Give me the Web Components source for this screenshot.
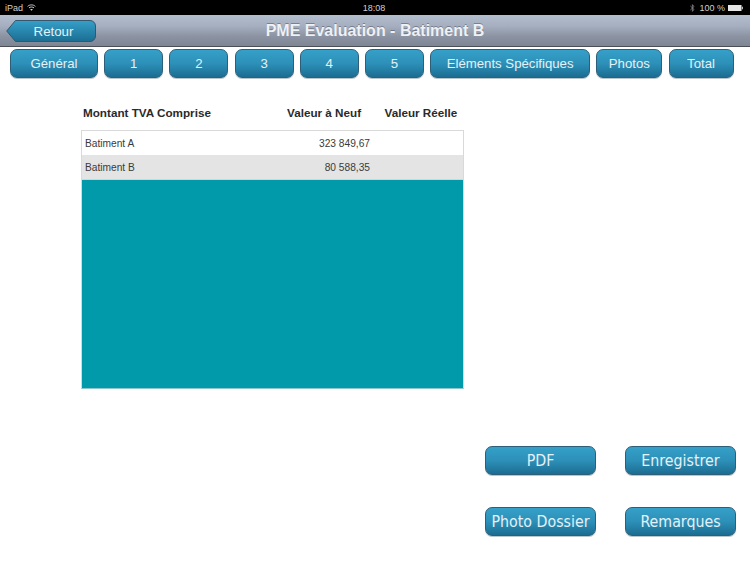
<!DOCTYPE html>
<html lang="fr">
<head>
<meta charset="utf-8">
<title>PME Evaluation</title>
<style>
  html, body { margin: 0; padding: 0; background: #fff; }
  body { width: 750px; height: 563px; overflow: hidden; font-family: "Liberation Sans", Arial, sans-serif; }
</style>
</head>
<body>
<status-bar></status-bar>
<nav-bar heading="PME Evaluation - Batiment B"></nav-bar>
<tab-row>
  <app-button style="width:88px">Général</app-button>
  <app-button style="width:59px">1</app-button>
  <app-button style="width:59px">2</app-button>
  <app-button style="width:59px">3</app-button>
  <app-button style="width:59px">4</app-button>
  <app-button style="width:59px">5</app-button>
  <app-button style="width:160px">Eléments Spécifiques</app-button>
  <app-button style="width:66px">Photos</app-button>
  <app-button style="width:65px">Total</app-button>
</tab-row>
<value-table>
  <value-row slot="rows" name="Batiment A" value="323 849,67"></value-row>
  <value-row slot="rows" name="Batiment B" value="80 588,35" selected></value-row>
</value-table>
<action-grid>
  <app-button alt>PDF</app-button>
  <app-button alt>Enregistrer</app-button>
  <app-button alt>Photo Dossier</app-button>
  <app-button alt>Remarques</app-button>
</action-grid>

<script>
class StatusBar extends HTMLElement {
  constructor() {
    super();
    const shadow = this.attachShadow({ mode: 'open' });
    shadow.innerHTML = `
      <style>
        :host {
          display: grid;
          grid-template-columns: 1fr auto 1fr;
          align-items: center;
          height: 15px;
          padding: 0 7px 0 5px;
          background: #000;
          color: #d0d0d0;
          font: 9px "Liberation Sans", Arial, sans-serif;
        }
        .left, .right { display: flex; align-items: center; }
        .left { gap: 4px; }
        .right { justify-content: flex-end; gap: 2px; }
        .right span { margin: 0 1px 0 2px; }
        svg { display: block; }
      </style>
      <div class="left">
        <span>iPad</span>
        <svg width="9" height="7" viewBox="0 0 9 7" fill="none" stroke="#d0d0d0">
          <path d="M.6 2.4C2.8.4 6.2.4 8.4 2.4"/>
          <path d="M2 3.9C3.4 2.7 5.6 2.7 7 3.9"/>
          <path d="M4.5 6.8 3.2 5.4C3.9 4.9 5.1 4.9 5.8 5.4Z" fill="#d0d0d0" stroke="none"/>
        </svg>
      </div>
      <div>18:08</div>
      <div class="right">
        <svg width="5" height="8" viewBox="0 0 5 8" fill="none" stroke="#8a8a8a" stroke-width=".8">
          <path d="M.4 2 4 5.4 2.4 7.4V.6L4 2.6.4 6"/>
        </svg>
        <span>100 %</span>
        <svg width="15" height="6" viewBox="0 0 15 6">
          <rect width="13.5" height="6" fill="#e6e6e6"/>
          <rect x="13.8" y="1.7" width="1.2" height="2.6" fill="#bbb"/>
        </svg>
      </div>
    `;
  }
}

class NavBar extends HTMLElement {
  constructor() {
    super();
    const shadow = this.attachShadow({ mode: 'open' });
    const heading = this.getAttribute('heading') || '';
    shadow.innerHTML = `
      <style>
        :host {
          display: grid;
          grid-template-columns: 1fr auto 1fr;
          align-items: center;
          box-sizing: border-box;
          height: 32px;
          padding-top: 1px;
          background: linear-gradient(#b2bdce, #a5afc0 35%, #8b93a2 70%, #7e8694);
          border-bottom: 1px solid #4a4e56;
        }
        h1 {
          margin: 0;
          color: #eef1f5;
          font: bold 16px "Liberation Sans", Arial, sans-serif;
          text-shadow: 0 -1px 0 rgba(60,66,80,.45);
        }
        .back {
          position: relative;
          display: flex;
          align-items: center;
          justify-content: center;
          box-sizing: border-box;
          width: 90px;
          height: 22px;
          margin-left: 6px;
          padding-left: 5px;
          color: #e4f1f7;
          font: 13.3px "Liberation Sans", Arial, sans-serif;
        }
        .back svg { position: absolute; inset: 0; }
        .back span { position: relative; }
      </style>
      <div>
        <div class="back">
          <svg width="90" height="22" viewBox="0 0 90 22">
            <defs>
              <linearGradient id="b" x1="0" y1="0" x2="0" y2="1">
                <stop offset="0" stop-color="#35a0c9"/>
                <stop offset="1" stop-color="#1c6d92"/>
              </linearGradient>
            </defs>
            <path d="M.7 11 9.5.5H84a5.5 5.5 0 0 1 5.5 5.5v10a5.5 5.5 0 0 1-5.5 5.5H9.5Z" fill="url(#b)" stroke="#35566b"/>
          </svg>
          <span>Retour</span>
        </div>
      </div>
      <h1>${heading}</h1>
      <div></div>
    `;
  }
}

class TabRow extends HTMLElement {
  constructor() {
    super();
    const shadow = this.attachShadow({ mode: 'open' });
    shadow.innerHTML = `
      <style>
        :host {
          display: flex;
          gap: 6.2px;
          height: 29px;
          padding: 2px 0 0 10px;
        }
      </style>
      <slot></slot>
    `;
  }
}

class AppButton extends HTMLElement {
  constructor() {
    super();
    const shadow = this.attachShadow({ mode: 'open' });
    shadow.innerHTML = `
      <style>
        :host {
          display: flex;
          align-items: center;
          justify-content: center;
          box-sizing: border-box;
          height: 29px;
          padding-bottom: 1px;
          border: 1px solid #2e5f78;
          border-radius: 7px;
          background: linear-gradient(#35a0c9, #2d90b8 50%, #1c6d92);
          box-shadow: 0 1px 0 rgba(60,90,110,.35);
          color: #e4f1f7;
          font: 13.2px "Liberation Sans", Arial, sans-serif;
          white-space: nowrap;
        }
        :host([alt]) {
          padding-bottom: 0;
          font: condensed 15.8px "DejaVu Sans", Verdana, sans-serif;
        }
      </style>
      <slot></slot>
    `;
  }
}

class ValueRow extends HTMLElement {
  constructor() {
    super();
    const shadow = this.attachShadow({ mode: 'open' });
    const name = this.getAttribute('name') || '';
    const value = this.getAttribute('value') || '';
    shadow.innerHTML = `
      <style>
        :host {
          display: grid;
          grid-template-columns: 1fr 90px;
          align-items: center;
          height: 24px;
          padding: 0 93px 0 3px;
          background: #fff;
          color: #3a3a3a;
          font: 10.2px "Liberation Sans", Arial, sans-serif;
        }
        :host([selected]) { background: #e4e4e4; }
        .val { text-align: right; }
      </style>
      <div>${name}</div>
      <div class="val">${value}</div>
    `;
  }
}

class ValueTable extends HTMLElement {
  constructor() {
    super();
    const shadow = this.attachShadow({ mode: 'open' });
    shadow.innerHTML = `
      <style>
        :host {
          display: block;
          width: 383px;
          margin: 25px 0 0 81px;
          font: bold 11.7px "Liberation Sans", Arial, sans-serif;
          color: #2a2a2a;
        }
        .head {
          display: grid;
          grid-template-columns: 204px 97.5px auto;
          box-sizing: border-box;
          height: 27px;
          padding: 3px 0 0 2px;
          line-height: 14px;
        }
        .body {
          box-sizing: border-box;
          height: 259px;
          display: flex;
          flex-direction: column;
          border: 1px solid #d9d9d9;
          border-bottom-color: #8ec6cd;
          background: #019aaa;
        }
        .rows { border-bottom: 1px solid #cfd6d6; }
        slot { display: block; }
      </style>
      <div class="head">
        <div>Montant TVA Comprise</div>
        <div>Valeur à Neuf</div>
        <div>Valeur Réelle</div>
      </div>
      <div class="body">
        <div class="rows"><slot name="rows"></slot></div>
      </div>
    `;
  }
}

class ActionGrid extends HTMLElement {
  constructor() {
    super();
    const shadow = this.attachShadow({ mode: 'open' });
    shadow.innerHTML = `
      <style>
        :host {
          display: grid;
          grid-template-columns: 111px 111px;
          column-gap: 29px;
          row-gap: 32px;
          margin: 57px 0 0 485px;
        }
      </style>
      <slot></slot>
    `;
  }
}

customElements.define('status-bar', StatusBar);
customElements.define('nav-bar', NavBar);
customElements.define('tab-row', TabRow);
customElements.define('app-button', AppButton);
customElements.define('value-row', ValueRow);
customElements.define('value-table', ValueTable);
customElements.define('action-grid', ActionGrid);
</script>
</body>
</html>
